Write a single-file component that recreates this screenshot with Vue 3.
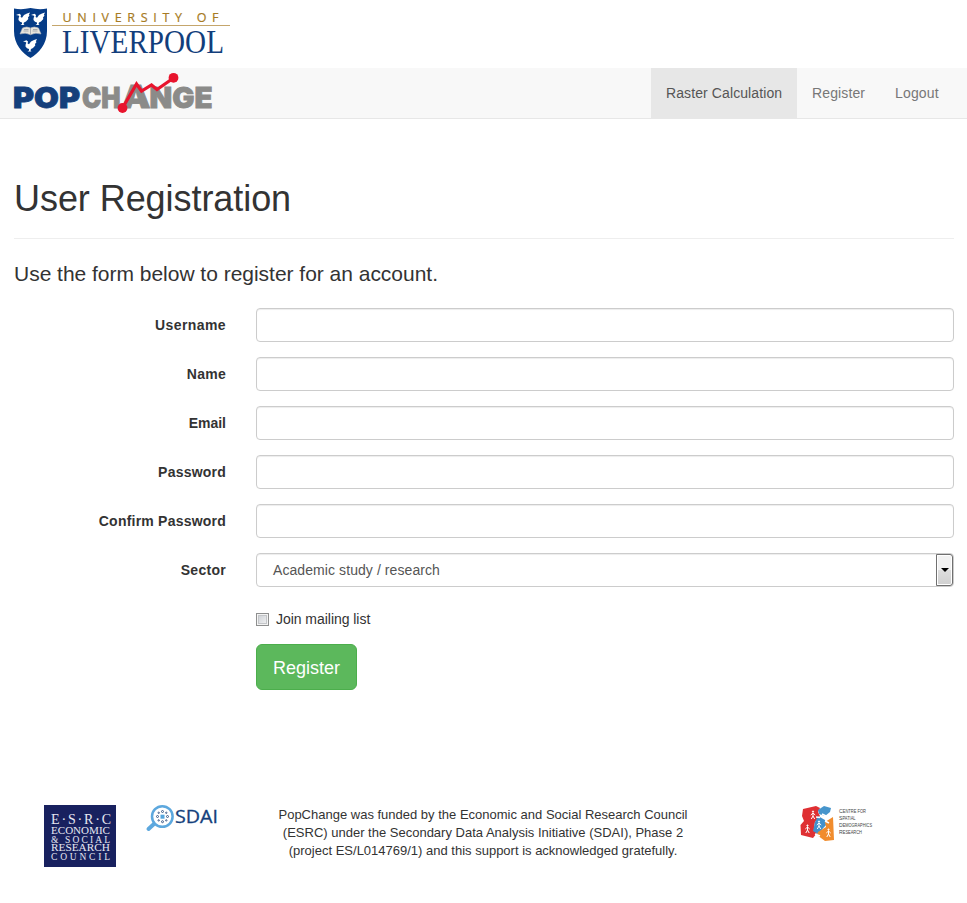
<script setup>
import { ref } from 'vue'

const navItems = [
  { label: 'Raster Calculation', active: true, cls: 'raster' },
  { label: 'Register', active: false, cls: 'reg' },
  { label: 'Logout', active: false, cls: 'out' },
]
const fields = [
  { id: 'username', label: 'Username', type: 'text' },
  { id: 'name', label: 'Name', type: 'text' },
  { id: 'email', label: 'Email', type: 'email' },
  { id: 'password', label: 'Password', type: 'password' },
  { id: 'confirm', label: 'Confirm Password', type: 'password' },
]
const sector = ref('Academic study / research')
const birds = [
  [16, 12],
  [31, 12],
  [23, 38.5],
]
const people = [
  [813, 815],
  [807.5, 829],
  [819, 825],
  [828.5, 833],
]
</script>

<template>
  <div class="page">
    <header class="brand">
      <svg width="240" height="68" viewBox="0 0 240 68">
        <path d="M14 8.500Q22 10 30.500 8Q39 10 47 8.500V31C47 44 39 53 30.500 58C22 53 14 44 14 31Z" fill="#063c87" />
        <g v-for="(b, i) in birds" :key="i" :transform="`translate(${b[0]} ${b[1]})`" fill="#fff">
          <path d="M0 3L2 2.200L3.500 1.800L5 3L4.600 5L6 5.800L8 3L11 1.500L14 .5L12.800 3L13.600 3.500L12 5.500L12.300 7L10 9.500L8 10.500L7.500 12L8.500 13H4.500L6 12L6 10.500L4 9.800L2.500 8L2.600 6L3.300 4.300L2.500 3.500Z" />
        </g>
        <path d="M22.500 28Q27 26 30.500 28Q34 26 38.500 28L41 34Q35 32 30.500 34.800Q26 32 20 34Z" fill="#e9e5dc" stroke="#aeb4bd" stroke-width=".6" />
        <path d="M30.500 28V34.500M24 29.500H28.500M33 29.500H37.500M23.500 31H28.500M32.500 31H37.500" stroke="#8d93a0" stroke-width=".7" />
        <path d="M52 25.500H230" stroke="#c5a66c" stroke-width="1" />
        <text x="62.500" y="21.700" textLength="156" class="uni">UNIVERSITY OF</text>
        <text x="62" y="53" textLength="162" lengthAdjust="spacingAndGlyphs" class="liv">LIVERPOOL</text>
      </svg>
    </header>

    <nav class="navbar">
      <svg width="220" height="50" viewBox="0 68 220 50">
        <text x="13" y="107.700" textLength="67" lengthAdjust="spacingAndGlyphs" class="pop navy">POP</text>
        <text x="82" y="107.700" textLength="38.500" lengthAdjust="spacingAndGlyphs" class="pop grey">CH</text>
        <text x="121.500" y="107.700" textLength="29" lengthAdjust="spacingAndGlyphs" class="pop grey peak">A</text>
        <text x="149.500" y="107.700" textLength="63" lengthAdjust="spacingAndGlyphs" class="pop grey">NGE</text>
        <path d="M122.500 108L136.500 84L141.500 91L151.500 85L157 89.500L173.500 78" fill="none" stroke="#e8142d" stroke-width="3.200" />
        <circle cx="122.500" cy="108" r="4.900" fill="#e8142d" />
        <circle cx="173.500" cy="77.800" r="4.900" fill="#e8142d" />
      </svg>
      <ul>
        <li v-for="n in navItems" :key="n.label" :class="[n.cls, { active: n.active }]"><a href="#">{{ n.label }}</a></li>
      </ul>
    </nav>

    <main>
      <h1><span>User Registration</span></h1>
      <p class="lead">Use the form below to register for an account.</p>
      <form @submit.prevent>
        <div v-for="f in fields" :key="f.id" class="row">
          <label :for="f.id" :class="f.id">{{ f.label }}</label>
          <input :id="f.id" class="control" :type="f.type" />
        </div>
        <div class="row">
          <label for="sector" class="sector">Sector</label>
          <div id="sector" class="control select" tabindex="0">
            <span>{{ sector }}</span>
            <i class="arrow"><svg width="8" height="4" viewBox="0 0 8 4"><path d="M0 0H8L4 4Z" fill="#000" /></svg></i>
          </div>
        </div>
        <div class="check"><input id="mail" type="checkbox" /><label for="mail">Join mailing list</label></div>
        <button type="submit">Register</button>
      </form>
    </main>

    <footer>
      <svg class="esrc" width="72" height="62" viewBox="44 805 72 62">
        <rect x="44" y="805" width="72" height="62" fill="#18215f" />
        <g class="council">
          <text x="51" y="823.500" textLength="60" class="top">E·S·R·C</text>
          <text x="51" y="834" textLength="59" lengthAdjust="spacingAndGlyphs">ECONOMIC</text>
          <text x="51" y="842.700" textLength="59">&amp; SOCIAL</text>
          <text x="51" y="851.300" textLength="59" lengthAdjust="spacingAndGlyphs">RESEARCH</text>
          <text x="51" y="859.700" textLength="59">COUNCIL</text>
        </g>
      </svg>
      <svg class="sdai" width="74" height="30" viewBox="145 803 74 30">
        <path d="M154.500 823.500L148.500 829" stroke="#5da8de" stroke-width="4" stroke-linecap="round" />
        <circle cx="162.300" cy="816.500" r="10.300" fill="#fff" stroke="#5da8de" stroke-width="2.500" />
        <rect x="160.500" y="814.700" width="4" height="4" fill="#55a5dd" />
        <g fill="none" stroke="#304f80" stroke-width=".9">
          <circle cx="157.500" cy="816.500" r="1" /><circle cx="167.500" cy="816.500" r="1" />
          <circle cx="162.500" cy="811.500" r="1" /><circle cx="162.500" cy="821.700" r="1" />
          <circle cx="158.700" cy="812.800" r=".7" /><circle cx="166.300" cy="812.800" r=".7" />
          <circle cx="158.700" cy="820.400" r=".7" /><circle cx="166.300" cy="820.400" r=".7" />
        </g>
        <text x="175" y="822.700" textLength="43" lengthAdjust="spacingAndGlyphs" class="sd">SDAI</text>
      </svg>
      <p><span class="l1">PopChange was funded by the Economic and Social Research Council</span><span class="l2">(ESRC) under the Secondary Data Analysis Initiative (SDAI), Phase 2</span><span class="l3">(project ES/L014769/1) and this support is acknowledged gratefully.</span></p>
      <svg class="csd" width="76" height="40" viewBox="799 803 76 40">
        <path d="M803 809L816 806L820 808L818 812L820 816L815 822L814 827L817 833L813 838L801 835L800.500 825L804 821L802 816Z" fill="#df3033" />
        <path d="M818 810L824 806L831 808L830 812L825 816L819 814Z" fill="#4695cc" />
        <path d="M815 822L818 816L825 820L826 825L818 834L813 831Z" fill="#4291cc" />
        <path d="M825 822L833 817L834 840L825 841L817 835L818 832L826 827Z" fill="#f18c2d" />
        <path d="M816 817L820 817.500M822 814L826 816M815 834L820 836M825 821L829 823" stroke="#fff" stroke-width="1.500" />
        <g v-for="(p, i) in people" :key="i" :transform="`translate(${p[0]} ${p[1]})`" stroke="#fff" fill="none" stroke-width="1">
          <circle cx="0" cy="-3.500" r=".6" fill="#fff" />
          <path d="M0 -2.500V1L-1.700 4M0 1L1.700 4M-2.200 0L0 -2L2.200 0" />
        </g>
        <g class="centre">
          <text x="839" y="813" textLength="27" lengthAdjust="spacingAndGlyphs">C<tspan>ENTRE FOR</tspan></text>
          <text x="839" y="820" textLength="16.500" lengthAdjust="spacingAndGlyphs">S<tspan>PATIAL</tspan></text>
          <text x="839" y="827" textLength="33" lengthAdjust="spacingAndGlyphs">D<tspan>EMOGRAPHICS</tspan></text>
          <text x="839" y="834" textLength="23" lengthAdjust="spacingAndGlyphs">R<tspan>ESEARCH</tspan></text>
        </g>
      </svg>
    </footer>
  </div>
</template>

<style>
body { margin: 0; background: #fff; }
</style>

<style scoped>
* { box-sizing: border-box; }
.page { width: 967px; height: 903px; overflow: hidden; font: 14px/20px "Liberation Sans", Arial, sans-serif; color: #333; }
svg { display: block; flex: none; overflow: visible; }
.brand { height: 68px; }
.uni { font: 500 12.500px "Open Sans", sans-serif; fill: #a77b24; stroke: #a77b24; stroke-width: .2px; }
.liv { font: 34px "Liberation Serif", serif; fill: #123e7c; }
.navbar { height: 51px; display: flex; justify-content: space-between; background: #f8f8f8; border-bottom: 1px solid #e7e7e7; padding-right: 13px; }
.pop { font: 900 28.500px Inter, sans-serif; stroke-width: .8px; }
.peak { font-size: 32px; }
.navy { fill: #153f7b; stroke: #153f7b; }
.grey { fill: #8b8b89; stroke: #8b8b89; }
ul { display: flex; margin: 0; padding: 0; list-style: none; }
li { height: 50px; padding: 15px; white-space: nowrap; }
li.raster { width: 146px; letter-spacing: .1px; }
li.reg { width: 83px; letter-spacing: .12px; }
li.out { width: 74px; letter-spacing: .17px; }
li.active { background: #e7e7e7; }
li a { color: #777; text-decoration: none; }
li.active a { color: #555; }
main { padding: 0 13px 0 14px; }
h1 { height: 120px; margin: 0; padding-top: 60px; border-bottom: 1px solid #eee; font-size: 36px; line-height: 40px; font-weight: 400; letter-spacing: -.06px; }
.lead { margin: 20px 0 0; height: 49px; font-size: 21px; line-height: 29px; letter-spacing: -.02px; }
.row { display: flex; height: 34px; margin-bottom: 15px; }
.row > label { width: 212px; padding-top: 7px; text-align: right; font-weight: 700; }
.row > .username { letter-spacing: .4px; }
.row > .name { letter-spacing: .25px; }
.row > .password, .row > .confirm { letter-spacing: .22px; }
.row > .sector { letter-spacing: .28px; }
.control { width: 698px; height: 34px; margin-left: 30px; border: 1px solid #ccc; border-radius: 4px; background: #fff; box-shadow: inset 0 1px 1px rgba(0, 0, 0, .075); padding: 6px 12px; font: inherit; outline: none; }
.select { display: flex; justify-content: space-between; padding: 0 0 0 16px; color: #555; line-height: 32px; letter-spacing: .08px; }
.arrow { width: 17px; height: 32px; display: flex; align-items: center; justify-content: center; border: 1px solid #707070; border-radius: 0 3px 3px 0; background: linear-gradient(#f2f2f2 0 50%, #dedede 50%, #d0d0d0); box-shadow: inset 0 0 0 1px #fff; }
.check { display: flex; height: 42px; margin-left: 242px; padding-top: 7px; letter-spacing: -.04px; }
.check input { appearance: none; width: 13px; height: 13px; margin: 4px 7px 0 0; border: 1px solid #8e8f8f; background: linear-gradient(135deg, #c8ccd2, #f6f6f6); box-shadow: inset 0 0 0 1px #f4f4f4, inset 0 0 0 2px #c4c6c9; }
button { display: block; width: 101px; height: 46px; margin-left: 242px; padding: 2px 0 0; border: 1px solid #4cae4c; border-radius: 6px; background: #5cb85c; color: #fff; font: 18px/24px "Liberation Sans", Arial, sans-serif; }
footer { display: flex; align-items: flex-start; margin-top: 113px; padding-left: 44px; }
.esrc { margin-top: 2px; }
.council { font: 9.500px "Liberation Serif", serif; fill: #e7e8f2; }
.top { font-size: 14px; }
.sdai { margin-left: 29px; }
.sd { font: 18px "Open Sans", sans-serif; fill: #143f7c; stroke: #143f7c; stroke-width: .3px; }
footer p { width: 440px; margin: 3px 0 0 44px; font-size: 13px; line-height: 18px; text-align: center; }
footer p span { display: block; white-space: nowrap; }
.csd { margin-left: 96px; }
.centre { font: 6px "Liberation Sans", sans-serif; fill: #444; }
.centre tspan { font-size: 4.600px; }
</style>
